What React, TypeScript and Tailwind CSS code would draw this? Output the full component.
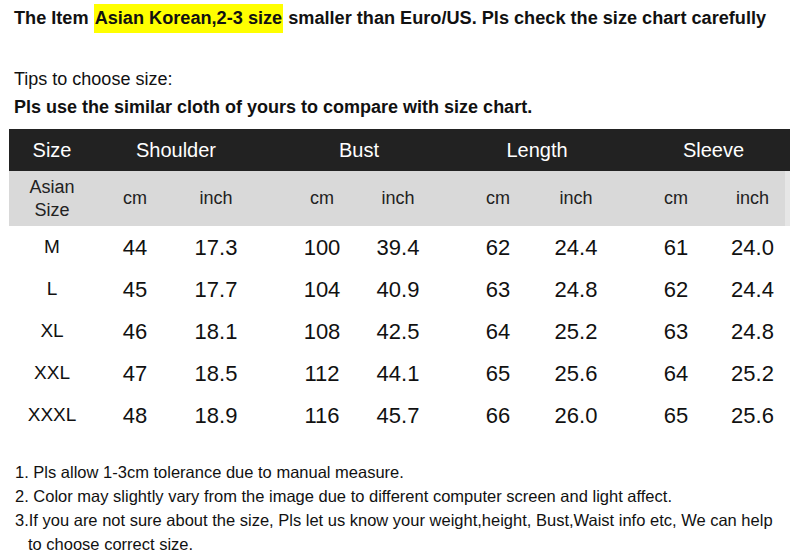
import React from "react";

const rows = [
  ["M", "44", "17.3", "100", "39.4", "62", "24.4", "61", "24.0"],
  ["L", "45", "17.7", "104", "40.9", "63", "24.8", "62", "24.4"],
  ["XL", "46", "18.1", "108", "42.5", "64", "25.2", "63", "24.8"],
  ["XXL", "47", "18.5", "112", "44.1", "65", "25.6", "64", "25.2"],
  ["XXXL", "48", "18.9", "116", "45.7", "66", "26.0", "65", "25.6"],
];

const cols = "grid-cols-[86px_80px_82px_26px_78px_74px_24px_78px_78px_22px_78px_75px]";

export default function App() {
  return (
    <div
      className="w-[800px] h-[560px] bg-white text-[#111] overflow-hidden relative"
      style={{ fontFamily: '"Liberation Sans", Arial, sans-serif' }}
    >
      <div className="pt-[4px] pl-[14px] flex items-center h-[33px] text-[18.15px] font-bold leading-[29px] whitespace-nowrap">
        <span>The Item&nbsp;</span>
        <span className="bg-[#ffff00] px-[1px]">Asian Korean,2-3 size</span>
        <span>&nbsp;smaller than Euro/US. Pls check the size chart carefully</span>
      </div>
      <div className="mt-[32px] pl-[14px] text-[18px] leading-[28px]">Tips to choose size:</div>
      <div className="pl-[14px] text-[18px] font-bold leading-[28px]">
        Pls use the similar cloth of yours to compare with size chart.
      </div>

      <div className="ml-[9px] mt-[8px] w-[781px]">
        <div className={`grid ${cols} h-[42px] bg-[#222222] text-white text-[20px] items-center`}>
          <div className="text-center">Size</div>
          <div className="col-span-2 text-center">Shoulder</div>
          <div />
          <div className="col-span-2 text-center">Bust</div>
          <div />
          <div className="col-span-2 text-center">Length</div>
          <div />
          <div className="col-span-2 text-center">Sleeve</div>
        </div>
        <div className={`grid ${cols} h-[55px] bg-[#d9d9d9] text-[18px] items-center border-r-[5px] border-[#e6e6e6] text-[#222]`}>
          <div className="text-center leading-[23px]">
            Asian
            <br />
            Size
          </div>
          <div className="text-center">cm</div>
          <div className="text-center">inch</div>
          <div />
          <div className="text-center">cm</div>
          <div className="text-center">inch</div>
          <div />
          <div className="text-center">cm</div>
          <div className="text-center">inch</div>
          <div />
          <div className="text-center">cm</div>
          <div className="text-center">inch</div>
        </div>
        {rows.map((r) => (
          <div key={r[0]} className={`grid ${cols} h-[42px] items-center text-[#111]`}>
            <div className="text-center text-[19px]">{r[0]}</div>
            <div className="text-center text-[22px]">{r[1]}</div>
            <div className="text-center text-[22px]">{r[2]}</div>
            <div />
            <div className="text-center text-[22px]">{r[3]}</div>
            <div className="text-center text-[22px]">{r[4]}</div>
            <div />
            <div className="text-center text-[22px]">{r[5]}</div>
            <div className="text-center text-[22px]">{r[6]}</div>
            <div />
            <div className="text-center text-[22px]">{r[7]}</div>
            <div className="text-center text-[22px]">{r[8]}</div>
          </div>
        ))}
      </div>

      <div className="mt-[24px] pl-[15px] text-[16.5px] leading-[24px] text-[#111]">
        <div>1. Pls allow 1-3cm tolerance due to manual measure.</div>
        <div>2. Color may slightly vary from the image due to different computer screen and light affect.</div>
        <div>3.If you are not sure about the size, Pls let us know your weight,height, Bust,Waist info etc, We can help</div>
        <div className="pl-[13px]">to choose correct size.</div>
      </div>
    </div>
  );
}
